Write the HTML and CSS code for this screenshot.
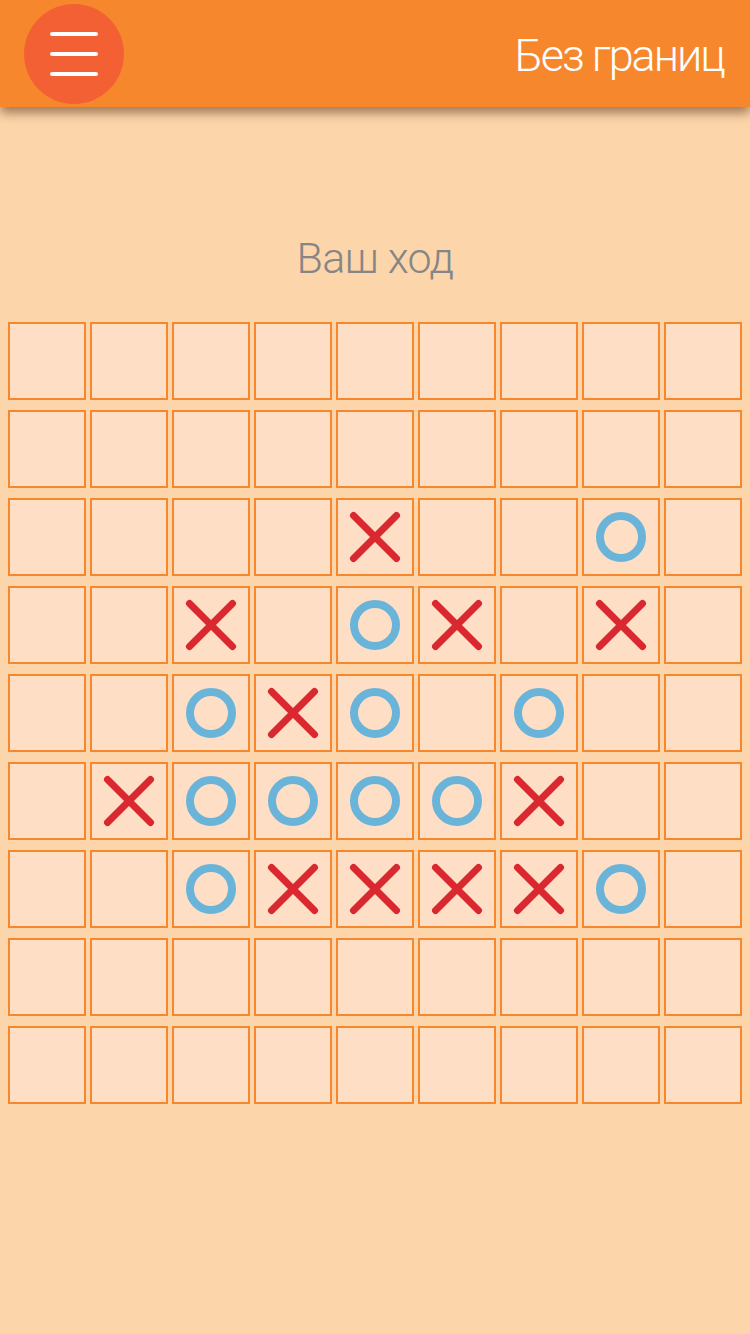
FILE: index.html
```html
<!DOCTYPE html>
<html lang="ru">
<head>
<meta charset="utf-8">
<title>Без границ</title>
<link rel="stylesheet" href="styles.css">
</head>
<body>
<header class="topbar">
  <button class="menu-btn" aria-label="Меню">
    <span class="bar"></span><span class="bar"></span><span class="bar"></span>
  </button>
  <h1 class="app-title">Без границ</h1>
</header>
<main class="game">
  <p class="status">Ваш ход</p>
  <div class="board">
    <div class="cell"></div><div class="cell"></div><div class="cell"></div><div class="cell"></div><div class="cell"></div><div class="cell"></div><div class="cell"></div><div class="cell"></div><div class="cell"></div>
    <div class="cell"></div><div class="cell"></div><div class="cell"></div><div class="cell"></div><div class="cell"></div><div class="cell"></div><div class="cell"></div><div class="cell"></div><div class="cell"></div>
    <div class="cell"></div><div class="cell"></div><div class="cell"></div><div class="cell"></div>
    <div class="cell"><svg class="mark" viewBox="0 0 74 74"><path class="x" d="M15.5 15.5L58.5 58.5M58.5 15.5L15.5 58.5"/></svg></div>
    <div class="cell"></div><div class="cell"></div>
    <div class="cell"><svg class="mark" viewBox="0 0 74 74"><circle class="o" cx="37" cy="37" r="21"/></svg></div>
    <div class="cell"></div>
    <div class="cell"></div><div class="cell"></div>
    <div class="cell"><svg class="mark" viewBox="0 0 74 74"><path class="x" d="M15.5 15.5L58.5 58.5M58.5 15.5L15.5 58.5"/></svg></div>
    <div class="cell"></div>
    <div class="cell"><svg class="mark" viewBox="0 0 74 74"><circle class="o" cx="37" cy="37" r="21"/></svg></div>
    <div class="cell"><svg class="mark" viewBox="0 0 74 74"><path class="x" d="M15.5 15.5L58.5 58.5M58.5 15.5L15.5 58.5"/></svg></div>
    <div class="cell"></div>
    <div class="cell"><svg class="mark" viewBox="0 0 74 74"><path class="x" d="M15.5 15.5L58.5 58.5M58.5 15.5L15.5 58.5"/></svg></div>
    <div class="cell"></div>
    <div class="cell"></div><div class="cell"></div>
    <div class="cell"><svg class="mark" viewBox="0 0 74 74"><circle class="o" cx="37" cy="37" r="21"/></svg></div>
    <div class="cell"><svg class="mark" viewBox="0 0 74 74"><path class="x" d="M15.5 15.5L58.5 58.5M58.5 15.5L15.5 58.5"/></svg></div>
    <div class="cell"><svg class="mark" viewBox="0 0 74 74"><circle class="o" cx="37" cy="37" r="21"/></svg></div>
    <div class="cell"></div>
    <div class="cell"><svg class="mark" viewBox="0 0 74 74"><circle class="o" cx="37" cy="37" r="21"/></svg></div>
    <div class="cell"></div><div class="cell"></div>
    <div class="cell"></div>
    <div class="cell"><svg class="mark" viewBox="0 0 74 74"><path class="x" d="M15.5 15.5L58.5 58.5M58.5 15.5L15.5 58.5"/></svg></div>
    <div class="cell"><svg class="mark" viewBox="0 0 74 74"><circle class="o" cx="37" cy="37" r="21"/></svg></div>
    <div class="cell"><svg class="mark" viewBox="0 0 74 74"><circle class="o" cx="37" cy="37" r="21"/></svg></div>
    <div class="cell"><svg class="mark" viewBox="0 0 74 74"><circle class="o" cx="37" cy="37" r="21"/></svg></div>
    <div class="cell"><svg class="mark" viewBox="0 0 74 74"><circle class="o" cx="37" cy="37" r="21"/></svg></div>
    <div class="cell"><svg class="mark" viewBox="0 0 74 74"><path class="x" d="M15.5 15.5L58.5 58.5M58.5 15.5L15.5 58.5"/></svg></div>
    <div class="cell"></div><div class="cell"></div>
    <div class="cell"></div><div class="cell"></div>
    <div class="cell"><svg class="mark" viewBox="0 0 74 74"><circle class="o" cx="37" cy="37" r="21"/></svg></div>
    <div class="cell"><svg class="mark" viewBox="0 0 74 74"><path class="x" d="M15.5 15.5L58.5 58.5M58.5 15.5L15.5 58.5"/></svg></div>
    <div class="cell"><svg class="mark" viewBox="0 0 74 74"><path class="x" d="M15.5 15.5L58.5 58.5M58.5 15.5L15.5 58.5"/></svg></div>
    <div class="cell"><svg class="mark" viewBox="0 0 74 74"><path class="x" d="M15.5 15.5L58.5 58.5M58.5 15.5L15.5 58.5"/></svg></div>
    <div class="cell"><svg class="mark" viewBox="0 0 74 74"><path class="x" d="M15.5 15.5L58.5 58.5M58.5 15.5L15.5 58.5"/></svg></div>
    <div class="cell"><svg class="mark" viewBox="0 0 74 74"><circle class="o" cx="37" cy="37" r="21"/></svg></div>
    <div class="cell"></div>
    <div class="cell"></div><div class="cell"></div><div class="cell"></div><div class="cell"></div><div class="cell"></div><div class="cell"></div><div class="cell"></div><div class="cell"></div><div class="cell"></div>
    <div class="cell"></div><div class="cell"></div><div class="cell"></div><div class="cell"></div><div class="cell"></div><div class="cell"></div><div class="cell"></div><div class="cell"></div><div class="cell"></div>
  </div>
</main>
</body>
</html>
```

FILE: styles.css
```css
html, body {
  margin: 0;
  padding: 0;
}
body {
  background: #fdd5aa;
  min-height: 1334px;
  font-family: "Roboto", "Liberation Sans", sans-serif;
}
.topbar {
  height: 107px;
  background: #f7872c;
  display: flex;
  align-items: center;
  justify-content: space-between;
  padding: 0 26px 0 24px;
  box-shadow: 0 6px 10px rgba(80, 50, 20, 0.55);
  position: relative;
  z-index: 1;
}
.menu-btn {
  width: 100px;
  height: 100px;
  border-radius: 50%;
  background: #f26033;
  border: none;
  padding: 0;
  display: flex;
  flex-direction: column;
  align-items: center;
  justify-content: center;
  gap: 16px;
  margin-top: 1px;
}
.bar {
  display: block;
  width: 48px;
  height: 4px;
  border-radius: 2px;
  background: #ffffff;
}
.app-title {
  margin: 4px 0 0;
  color: #ffffff;
  font-family: "Roboto", "Liberation Sans", sans-serif;
  font-weight: 300;
  font-size: 45px;
  line-height: 1;
  letter-spacing: -2px;
}
.game {
  padding-top: 128px;
}
.status {
  margin: 0 0 41px;
  text-align: center;
  color: #868686;
  font-family: "Roboto", "Liberation Sans", sans-serif;
  font-weight: 300;
  font-size: 43px;
  line-height: 46px;
  letter-spacing: -0.7px;
}
.board {
  margin: 0 8px;
  display: grid;
  grid-template-columns: repeat(9, 78px);
  grid-auto-rows: 78px;
  column-gap: 4px;
  row-gap: 10px;
}
.cell {
  box-sizing: border-box;
  border: 2px solid #f7872c;
  background: #fedfc6;
}
.mark {
  display: block;
  width: 74px;
  height: 74px;
}
.x {
  fill: none;
  stroke: #d9282f;
  stroke-width: 7;
  stroke-linecap: round;
}
.o {
  fill: none;
  stroke: #6ab4da;
  stroke-width: 8;
}
```
